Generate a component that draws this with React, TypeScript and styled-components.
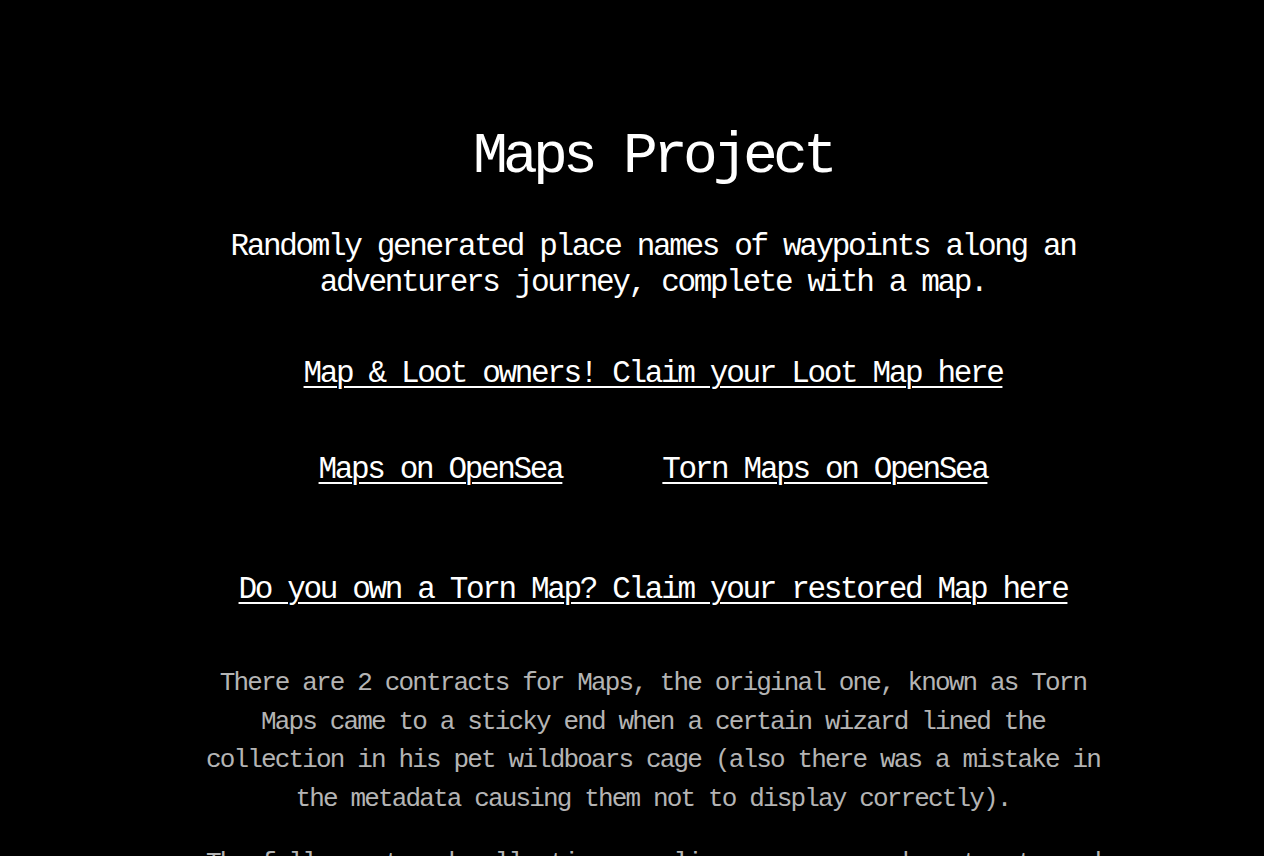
import React from "react";
import styled, { createGlobalStyle } from "styled-components";

const GlobalStyle = createGlobalStyle`
  html, body {
    margin: 0;
    padding: 0;
    background: #000;
  }
  body {
    font-family: "Liberation Mono", "Courier New", monospace;
    color: #fff;
  }
`;

const Page = styled.main`
  padding: 115px 0 0 42px;
  display: flex;
  justify-content: center;
`;

const Column = styled.div`
  width: 920px;
  display: flex;
  flex-direction: column;
  align-items: center;
  text-align: center;
`;

const Title = styled.h1`
  margin: 0;
  font-size: 58px;
  line-height: 84px;
  font-weight: normal;
  letter-spacing: -4.8px;
`;

const Subtitle = styled.p`
  margin: 30px 0 0;
  font-size: 31px;
  line-height: 36px;
  letter-spacing: -2.35px;
`;

const LinkRow = styled.div<{ $top: number }>`
  margin-top: ${(p) => p.$top}px;
  display: flex;
  gap: 100px;
  justify-content: center;
`;

const Link = styled.a`
  color: #fff;
  font-size: 31px;
  line-height: 36px;
  letter-spacing: -2.35px;
  text-decoration: underline;
  text-decoration-thickness: 2px;
  text-underline-offset: 4px;
  cursor: pointer;
`;

const Para = styled.p<{ $top: number }>`
  margin: ${(p) => p.$top}px 0 0;
  color: #b4b4b4;
  font-size: 26px;
  line-height: 38.5px;
  letter-spacing: -1.85px;
`;

export default function App() {
  return (
    <>
      <GlobalStyle />
      <Page>
        <Column>
          <Title>Maps Project</Title>
          <Subtitle>
            Randomly generated place names of waypoints along an adventurers
            journey, complete with a map.
          </Subtitle>
          <LinkRow $top={55}>
            <Link href="#">Map &amp; Loot owners! Claim your Loot Map here</Link>
          </LinkRow>
          <LinkRow $top={60}>
            <Link href="#">Maps on OpenSea</Link>
            <Link href="#">Torn Maps on OpenSea</Link>
          </LinkRow>
          <LinkRow $top={84}>
            <Link href="#">Do you own a Torn Map? Claim your restored Map here</Link>
          </LinkRow>
          <Para $top={56}>
            There are 2 contracts for Maps, the original one, known as Torn
            Maps came to a sticky end when a certain wizard lined the
            collection in his pet wildboars cage (also there was a mistake in
            the metadata causing them not to display correctly).
          </Para>
          <Para $top={26}>
            The fully restored collection now lives on a second contract, and
            every Torn Map holder can claim the matching restored Map for free.
          </Para>
        </Column>
      </Page>
    </>
  );
}
